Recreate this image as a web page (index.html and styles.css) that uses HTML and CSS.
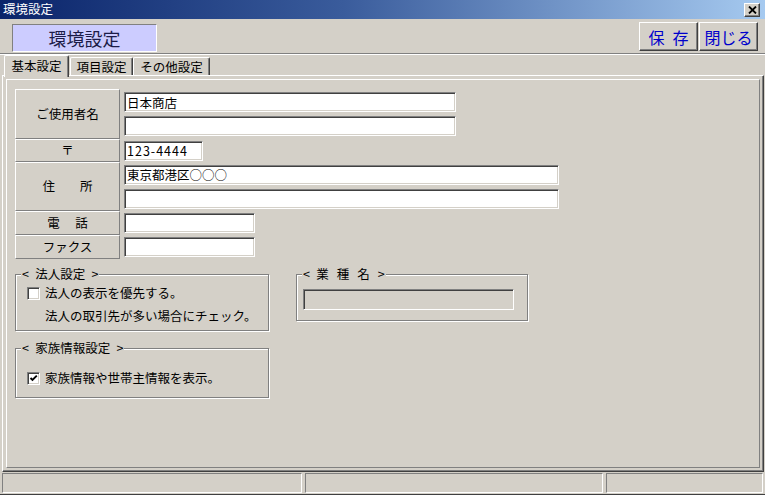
FILE: index.html
```html
<!DOCTYPE html>
<html lang="ja">
<head>
  <meta charset="UTF-8">
  <title>環境設定</title>
  <link rel="stylesheet" href="styles.css">
</head>
<body>
<div class="window">
  <div class="titlebar">
    <span class="title">環境設定</span>
    <span class="close">
      <svg width="9" height="8" viewBox="0 0 9 8"><path d="M1 0.5 L8 7.5 M8 0.5 L1 7.5" stroke="#000" stroke-width="1.8"/></svg>
    </span>
  </div>

  <div class="toolbar">
    <div class="caption">環境設定</div>
    <div class="actions">
      <button class="btn">保&ensp;存</button>
      <button class="btn">閉じる</button>
    </div>
  </div>

  <!-- タブ -->
  <div class="tabs">
    <div class="tab active">基本設定</div>
    <div class="tab">項目設定</div>
    <div class="tab wide">その他設定</div>
  </div>

  <div class="page">
    <div class="frame">
      <div class="form">
        <div class="row tall">
          <div class="label">ご使用者名</div>
          <div class="fields">
            <input class="field name" value="日本商店">
            <input class="field name" value="">
          </div>
        </div>
        <div class="row zip">
          <div class="label">〒</div>
          <div class="fields">
            <input class="field postal" value="123-4444">
          </div>
        </div>
        <div class="row addr">
          <div class="label">住　　所</div>
          <div class="fields">
            <input class="field address" value="東京都港区○○○">
            <input class="field address" value="">
          </div>
        </div>
        <div class="row short">
          <div class="label">電　 話</div>
          <div class="fields">
            <input class="field phone" value="">
          </div>
        </div>
        <div class="row short">
          <div class="label">ファクス</div>
          <div class="fields">
            <input class="field phone" value="">
          </div>
        </div>
      </div>

      <div class="groups">
        <div class="group-col">
          <fieldset class="group corp">
            <legend>&lt;&ensp;法人設定&ensp;&gt;</legend>
            <div class="group-body">
              <label class="check-row">
                <span class="checkbox"></span>
                <span>法人の表示を優先する。</span>
              </label>
              <div class="note">法人の取引先が多い場合にチェック。</div>
            </div>
          </fieldset>
          <fieldset class="group family">
            <legend>&lt;&ensp;家族情報設定&ensp;&gt;</legend>
            <div class="group-body">
              <label class="check-row">
                <span class="checkbox">
                  <svg width="9" height="9" viewBox="0 0 9 9"><path d="M1.5 4 L3.5 6 L7.8 1.6" fill="none" stroke="#000" stroke-width="1.9"/></svg>
                </span>
                <span>家族情報や世帯主情報を表示。</span>
              </label>
            </div>
          </fieldset>
        </div>
        <fieldset class="group industry">
          <legend>&lt;&ensp;<span class="spaced">業種名</span>&gt;</legend>
          <div class="group-body">
            <div class="field readonly"></div>
          </div>
        </fieldset>
      </div>
    </div>
  </div>

  <div class="statusbar">
    <div class="cell first"></div>
    <div class="cell second"></div>
    <div class="cell third"></div>
  </div>
</div>
</body>
</html>
```

FILE: styles.css
```css
* { box-sizing: border-box; }
body {
  margin: 0;
  background-color: #d4d0c8;
  font-family: "Noto Sans CJK JP", sans-serif;
  font-size: 12.5px;
  line-height: 1;
  color: #000;
}
.window {
  width: 765px;
  height: 495px;
  display: flex;
  flex-direction: column;
}

/* タイトルバー */
.titlebar {
  height: 19px;
  flex: none;
  display: flex;
  align-items: center;
  justify-content: space-between;
  padding: 0 5px 0 3px;
  background: linear-gradient(to right, #0a246a, #3a5c9c 45%, #a6caf0);
}
.title {
  color: #fff;
  font-size: 12.5px;
}
.close {
  width: 16px;
  height: 14px;
  display: flex;
  align-items: center;
  justify-content: center;
  background-color: #d4d0c8;
  border: 1px solid;
  border-color: #fff #404040 #404040 #fff;
  box-shadow: inset -1px -1px #808080;
}

/* 上部 */
.toolbar {
  height: 35px;
  flex: none;
  display: flex;
  justify-content: space-between;
  align-items: flex-start;
  padding: 5px 7px 0 12px;
  border-bottom: 1px solid #808080;
  box-shadow: 0 1px 0 #fff;
}
.caption {
  width: 145px;
  height: 28px;
  background-color: #ccccff;
  border: 1px solid;
  border-color: #808080 #fff #fff #808080;
  color: #1c1c48;
  font-size: 18px;
  line-height: 26px;
  text-align: center;
}
.actions {
  display: flex;
  gap: 1px;
  margin-top: -2px;
}
.btn {
  width: 59px;
  height: 29px;
  padding: 0;
  font-family: inherit;
  font-size: 16px;
  color: #0000cc;
  background-color: #d4d0c8;
  border: 1px solid;
  border-color: #fff #404040 #404040 #fff;
  box-shadow: inset -1px -1px #808080;
}

/* タブ */
.tabs {
  height: 21px;
  flex: none;
  display: flex;
  align-items: flex-end;
  padding-left: 4px;
}
.tab {
  height: 18px;
  width: 63px;
  padding-top: 3px;
  text-align: center;
  border-top: 1px solid #fff;
  border-left: 1px solid #fff;
  border-right: 1px solid #404040;
  box-shadow: inset -1px 0 #808080;
  border-radius: 2px 2px 0 0;
}
.tab.wide { width: 77px; }
.tab.active {
  position: relative;
  z-index: 1;
  width: 65px;
  height: 22px;
  margin-bottom: -2px;
  margin-right: 1px;
  padding-top: 4px;
  background-color: #d4d0c8;
}

.page {
  flex: 1;
  margin: 0 1px 0 2px;
  padding: 3px;
  border: 1px solid;
  border-color: #fff #404040 #404040 #fff;
  box-shadow: inset -1px -1px #808080;
}
.frame {
  height: 100%;
  padding: 9px 8px 0 8px;
  border: 1px solid;
  border-color: #fff #808080 #808080 #fff;
}

/* 入力欄 */
.row {
  display: flex;
  gap: 4px;
}
.row.tall { height: 50px; }
.row.zip { height: 23px; }
.row.addr { height: 49px; }
.row.short { height: 24px; }
.label {
  width: 105px;
  display: flex;
  align-items: center;
  justify-content: center;
  border: 1px solid;
  border-color: #fff #808080 #808080 #fff;
}
.fields {
  display: flex;
  flex-direction: column;
  justify-content: center;
  gap: 4px;
}
.field {
  height: 20px;
  padding: 0 2px;
  font-family: inherit;
  font-size: 12.5px;
  color: #000;
  background-color: #fff;
  border: 1px solid;
  border-color: #808080 #fff #fff #808080;
  box-shadow: inset 1px 1px #404040, inset -1px -1px #d4d0c8;
  outline: none;
}
.field.name { width: 332px; }
.field.postal { width: 79px; letter-spacing: 1px; }
.field.address { width: 435px; }
.field.phone { width: 131px; }
.field.readonly {
  width: 211px;
  height: 21px;
  background-color: #d4d0c8;
}

/* グループ */
.groups {
  display: flex;
  align-items: flex-start;
  gap: 27px;
  margin-top: 8px;
}
.group-col {
  display: flex;
  flex-direction: column;
  gap: 10px;
}
.group {
  margin: 0;
  padding: 0 6px 0 5px;
  min-inline-size: 0;
  border: 1px solid #808080;
  box-shadow: inset 1px 1px #fff, 1px 1px 0 #fff;
}
.group legend {
  padding: 0 1px;
  line-height: 14px;
  background-color: #d4d0c8;
}
.spaced {
  letter-spacing: 8px;
}
.group.corp { width: 254px; }
.group.corp .group-body { padding: 4px 0 6px 6px; }
.group.family { width: 254px; }
.group.family .group-body { padding: 15px 0 11px 6px; }
.group.industry { width: 232px; }
.group.industry .group-body { padding: 8px 0 10px 1px; }

.check-row {
  height: 16px;
  display: flex;
  align-items: center;
  gap: 5px;
}
.checkbox {
  width: 13px;
  height: 13px;
  display: flex;
  align-items: center;
  justify-content: center;
  background-color: #fff;
  border: 1px solid;
  border-color: #808080 #fff #fff #808080;
  box-shadow: inset 1px 1px #404040, inset -1px -1px #d4d0c8;
}
.note {
  height: 16px;
  margin-top: 7px;
  padding-left: 18px;
  line-height: 16px;
}

/* ステータスバー */
.statusbar {
  height: 23px;
  flex: none;
  display: flex;
  gap: 3px;
  padding: 1px 2px 2px 2px;
  border-bottom: 1px solid #404040;
}
.cell {
  height: 20px;
  border: 1px solid;
  border-color: #808080 #fff #fff #808080;
}
.cell.first { width: 300px; }
.cell.second { width: 298px; }
.cell.third { flex: 1; }
```
